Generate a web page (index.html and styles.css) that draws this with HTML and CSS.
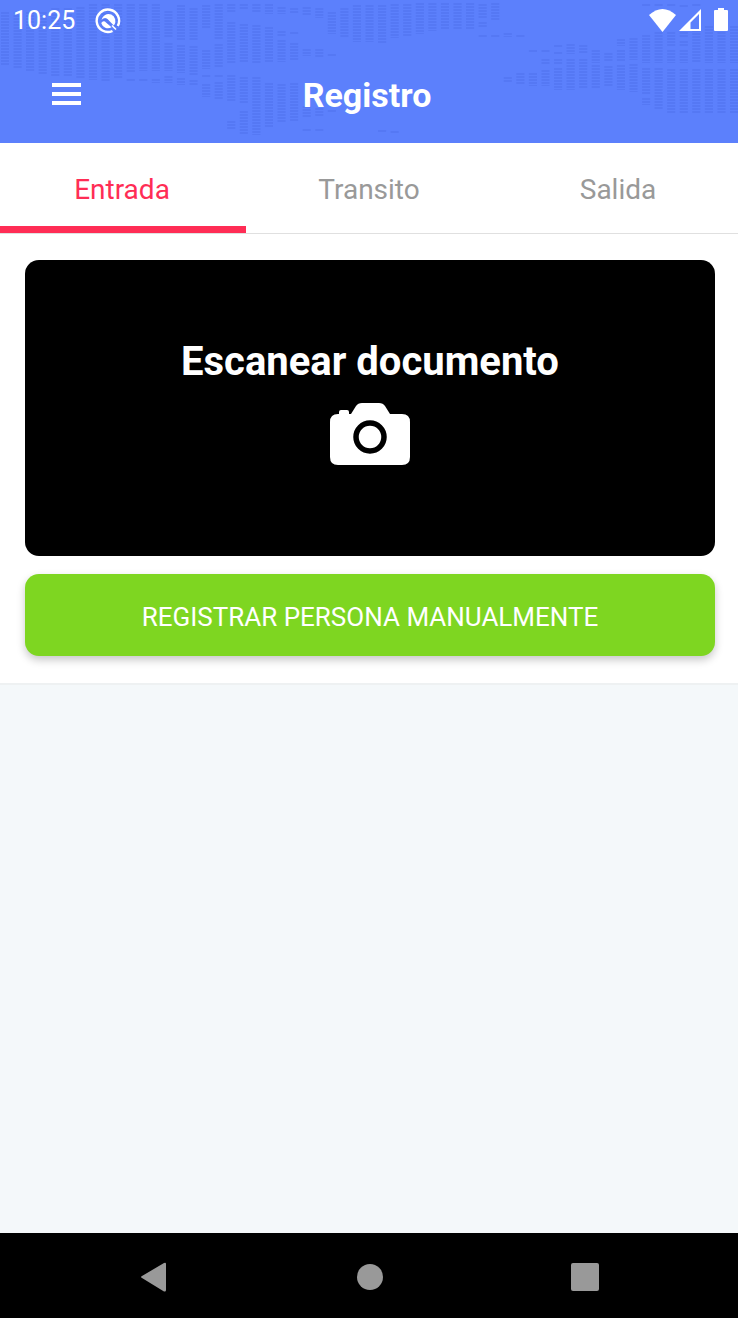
FILE: index.html
```
<!DOCTYPE html>
<html lang="es">
<head>
<meta charset="utf-8">
<meta name="viewport" content="width=device-width, initial-scale=1">
<title>Registro</title>
<link rel="stylesheet" href="styles.css">
</head>
<body>
<div class="app">
  <header class="header">
    <svg class="header-map" viewBox="0 0 738 143" preserveAspectRatio="xMidYMin slice" aria-hidden="true">
      <g transform="translate(5 0) scale(12.57 1)">
        <path d="M0 12V66M1 12V68M2 12V71M3 12V74M4 8V76M5 8V77M6 7V78M7 4V80M8 4V81M9 4V79M10 4V72M10 79V81M11 4V71M11 79V81M12 4V71M12 79V83M13 11V37M13 43V71M13 76V83M14 5V41M14 45V73M14 78V85M15 8V41M15 46V75M15 80V86M16 5V28M16 50V69M16 75V78M16 84V97M17 4V40M17 44V67M17 75V78M17 82V99M18 4V12M18 22V64M18 75V102M18 121V130M19 4V9M19 24V62M19 77V103M19 111V134M20 4V13M20 25V64M20 77V135M21 4V14M21 27V62M21 83V128M22 7V14M22 31V36M22 40V62M22 84V123M23 8V13M23 32V35M23 43V60M23 83V121M24 7V15M24 49V56M24 106V118M24 129V131M25 8V18M25 49V57M25 108V117M25 129V131M26 12V34M26 54V57M26 110V113M27 8V38M28 5V42M29 5V42M30 5V44M30 130V132M31 4V38M31 131V133M32 4V36M33 3V34M34 3V31M35 3V30M36 3V29M37 3V29M38 4V18M38 22V27M38 35V37M39 3V20M39 35V37M40 33V37M40 77V82M41 35V37M41 73V84M42 50V53M42 73V86M43 50V53M43 59V65M43 70V86M44 45V47M44 52V54M44 59V64M44 68V90M45 44V54M45 59V90M46 45V54M46 59V89M47 50V63M47 65V89M48 53V61M48 66V87M49 39V46M49 50V62M49 65V90M50 38V60M50 64V92M51 4V6M51 35V63M51 68V94M51 98V105M52 4V6M52 32V63M52 68V109M53 4V6M53 32V46M53 50V63M53 69V113M54 5V8M54 32V38M54 41V47M54 50V63M54 69V113M55 4V7M55 30V63M55 69V113M56 26V63M56 69V113M57 26V63M57 69V113M58 26V63M58 69V113"/>
      </g>
    </svg>
    <div class="status">
      <div class="status-group status-left">
        <time>10:25</time>
        <svg class="status-badge" viewBox="0 0 26 26" aria-hidden="true">
          <path d="M17.5 23A11.200 11.200 0 1 1 22.800 18" fill="none" stroke="#fff" stroke-width="2.4"/>
          <path d="M6.500 12A7 7 0 1 1 18.800 17.500L12.500 11Q9.500 8.500 6.500 12Z" fill="#fff"/>
          <path d="M6.200 15Q8.500 12 11 14.500L16.500 19.200A7 7 0 0 1 6.200 15Z" fill="#fff"/>
          <path d="M17 17.500L21 21.500" stroke="#fff" stroke-width="1.600"/>
        </svg>
      </div>
      <div class="status-group">
        <svg class="icon-wifi" viewBox="0 0 27 23" aria-hidden="true"><path d="M0 6Q13.500-6 27 6L13.500 23Z"/></svg>
        <svg class="icon-signal" viewBox="0 0 23 23" aria-hidden="true"><path fill-rule="evenodd" d="M22 0V22H0ZM20 5L11.500 13.500V20H20Z"/></svg>
        <svg class="icon-battery" viewBox="0 0 14 24" aria-hidden="true"><path d="M4 0H10V2H13Q14 2 14 3V22Q14 23 13 23H1Q0 23 0 22V3Q0 2 1 2H4Z"/></svg>
      </div>
    </div>
    <div class="toolbar">
      <button class="menu" type="button" aria-label="Menú">
        <svg viewBox="0 0 29 22" aria-hidden="true"><path d="M0 0H29V4H0ZM0 9H29V13H0ZM0 18H29V22H0Z"/></svg>
      </button>
      <h1 class="title">Registro</h1>
    </div>
  </header>

  <nav class="tabs">
    <button class="tab tab-active" type="button" aria-current="page">Entrada</button>
    <button class="tab" type="button">Transito</button>
    <button class="tab tab-last" type="button">Salida</button>
  </nav>

  <main class="content">
    <section class="panel">
      <button class="scan" type="button">
        <span>Escanear documento</span>
        <svg class="camera" viewBox="0 0 80 62" aria-hidden="true">
          <path fill="#fff" d="M8 11H9V9Q9 7 11 7H17Q19 7 19 9V11H21L26 3Q28 0 32 0H49Q53 0 55 3L60 11H72Q80 11 80 19V54Q80 62 72 62H8Q0 62 0 54V19Q0 11 8 11Z"/>
          <circle cx="40" cy="34" r="14" fill="none" stroke="#000" stroke-width="5.500"/>
        </svg>
      </button>
      <button class="manual" type="button">REGISTRAR PERSONA MANUALMENTE</button>
    </section>
  </main>

  <footer class="system">
    <button class="system-button" type="button" aria-label="Atrás"><svg viewBox="0 0 30 30" aria-hidden="true"><path d="M3 14Q1 15 3 16L25 29.500Q27 30 27 28V2Q27 0 25 1Z"/></svg></button>
    <button class="system-button" type="button" aria-label="Inicio"><svg viewBox="0 0 30 30" aria-hidden="true"><circle cx="15" cy="15" r="13"/></svg></button>
    <button class="system-button" type="button" aria-label="Recientes"><svg viewBox="0 0 30 30" aria-hidden="true"><rect x="1" y="1" width="28" height="28" rx="2"/></svg></button>
  </footer>
</div>
</body>
</html>
```
FILE: styles.css
```
* {
  box-sizing: border-box;
}

body {
  margin: 0;
  font-family: Roboto, "Liberation Sans", sans-serif;
  background: #f4f8fa;
}

button {
  margin: 0;
  padding: 0;
  border: 0;
  background: none;
  font: inherit;
  color: inherit;
}

svg {
  display: block;
}

.app {
  display: flex;
  flex-direction: column;
  min-height: 100vh;
}

.header {
  position: relative;
  padding-bottom: 22px;
  background: #5c80fc;
  color: #fff;
  fill: #fff;
}

.header-map {
  position: absolute;
  inset: 0;
  width: 100%;
  height: 100%;
}

.header-map path {
  fill: none;
  stroke: #5071ec;
  stroke-opacity: 0.55;
  stroke-width: 0.64;
  stroke-dasharray: 2 1;
}

.status {
  position: relative;
  display: flex;
  justify-content: space-between;
  height: 40px;
  padding: 0 10px 0 13px;
}

.status-group {
  display: flex;
  align-items: center;
  gap: 3px;
}

.status-left {
  gap: 20px;
  padding-top: 1px;
  font-size: 25px;
}

.status-badge {
  width: 26px;
  height: 26px;
}

.icon-wifi {
  width: 27px;
  height: 23px;
}

.icon-signal {
  width: 23px;
  height: 23px;
}

.icon-battery {
  width: 14px;
  height: 24px;
  margin-left: 9px;
}

.toolbar {
  position: relative;
  display: grid;
  grid-template-columns: 81px 1fr 85px;
  align-items: center;
  height: 81px;
  padding-top: 26px;
}

.menu {
  justify-self: end;
}

.menu svg {
  width: 29px;
  height: 22px;
}

.title {
  margin: 0;
  padding-top: 2px;
  font-size: 34px;
  line-height: 40px;
  font-weight: 700;
  text-align: center;
}

.tabs {
  display: grid;
  grid-template-columns: repeat(3, 1fr);
  height: 91px;
  background: #fff;
  border-bottom: 1px solid #e0e0e0;
}

.tab {
  padding-top: 9px;
  border-bottom: 7px solid transparent;
  font-size: 28px;
  color: #999;
}

.tab-active {
  padding-right: 2px;
  border-color: #ff2d55;
  color: #ff2d55;
}

.tab-last {
  padding-left: 6px;
}

.content {
  flex: 1;
}

.panel {
  display: flex;
  flex-direction: column;
  gap: 18px;
  padding: 26px 23px 27px 25px;
  background: #fff;
  border-bottom: 2px solid #eef1f2;
}

.scan {
  display: flex;
  flex-direction: column;
  align-items: center;
  gap: 17px;
  padding: 78px 20px 91px;
  border-radius: 14px;
  background: #000;
  color: #fff;
  font-size: 40px;
  line-height: 48px;
  font-weight: 700;
}

.camera {
  width: 80px;
  height: 62px;
}

.manual {
  height: 82px;
  padding-top: 3px;
  border-radius: 14px;
  background: #7ed621;
  box-shadow: 0 4px 8px rgba(0, 0, 0, 0.22);
  color: #fff;
  font-size: 26px;
}

.system {
  display: flex;
  justify-content: space-between;
  height: 85px;
  padding: 2px 138px 0 139px;
  background: #000;
  fill: #999;
}

.system-button svg {
  width: 30px;
  height: 30px;
}
```
